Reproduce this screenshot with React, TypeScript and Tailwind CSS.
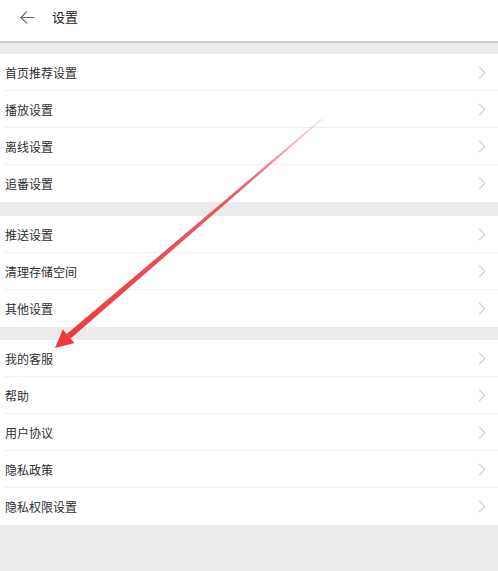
import React from "react";

const GROUPS: string[][] = [
  ["首页推荐设置", "播放设置", "离线设置", "追番设置"],
  ["推送设置", "清理存储空间", "其他设置"],
  ["我的客服", "帮助", "用户协议", "隐私政策", "隐私权限设置"],
];

const GAPS = ["h-[14px]", "h-[13px]"];

function Chevron() {
  return (
    <svg viewBox="0 0 8 14" className="h-[13px] w-[8px]" fill="none" stroke="#c4c4c4" strokeWidth="1.1">
      <polyline points="1,1 7,7 1,13" />
    </svg>
  );
}

function Row({ label, last }: { label: string; last: boolean }) {
  return (
    <div className="flex h-[37px] items-center pl-[5px]">
      <div className={`flex h-full flex-1 items-center pr-[12px] ${last ? "" : "border-b border-[#f0f0f0]"}`}>
        <span className="flex-1 pt-[1px] text-[12px] text-[#2e2e2e]">{label}</span>
        <Chevron />
      </div>
    </div>
  );
}

export default function App() {
  return (
    <div
      className="relative flex h-[571px] w-[498px] flex-col overflow-hidden bg-[#ebebeb]"
      style={{ fontFamily: '"Noto Sans CJK SC", "Noto Sans", sans-serif' }}
    >
      {/* Top bar */}
      <div className="flex h-[41px] items-center bg-white pb-[7px]">
        <svg viewBox="0 0 16 14" className="ml-[20px] h-[13px] w-[15px]" fill="none" stroke="#666" strokeWidth="1.3" strokeLinecap="round">
          <line x1="1" y1="7" x2="15" y2="7" />
          <polyline points="7,1 1,7 7,13" />
        </svg>
        <span className="ml-[17px] text-[13px] text-[#222]">设置</span>
      </div>
      <div className="h-[2px] bg-[#cdcdcd]" />
      <div className="h-[11px]" />

      {GROUPS.map((group, gi) => (
        <React.Fragment key={gi}>
          <div className="bg-white">
            {group.map((label, i) => (
              <Row key={label} label={label} last={i === group.length - 1} />
            ))}
          </div>
          {gi < GAPS.length && <div className={GAPS[gi]} />}
        </React.Fragment>
      ))}

      {/* Red annotation arrow */}
      <svg className="pointer-events-none absolute inset-0" width="498" height="571" viewBox="0 0 498 571">
        <defs>
          <linearGradient id="shaft" x1="322" y1="119" x2="67" y2="338" gradientUnits="userSpaceOnUse">
            <stop offset="0" stopColor="#e8454f" stopOpacity="0.15" />
            <stop offset="0.3" stopColor="#e23a48" stopOpacity="0.8" />
            <stop offset="1" stopColor="#ee3a3c" />
          </linearGradient>
        </defs>
        <polygon points="322.5,119.5 321.5,118.5 66.7,334 70.6,338.6" fill="url(#shaft)" />
        <polygon points="55,348 62.8,329.5 74.5,343.1" fill="#ee3a3c" />
      </svg>
    </div>
  );
}
